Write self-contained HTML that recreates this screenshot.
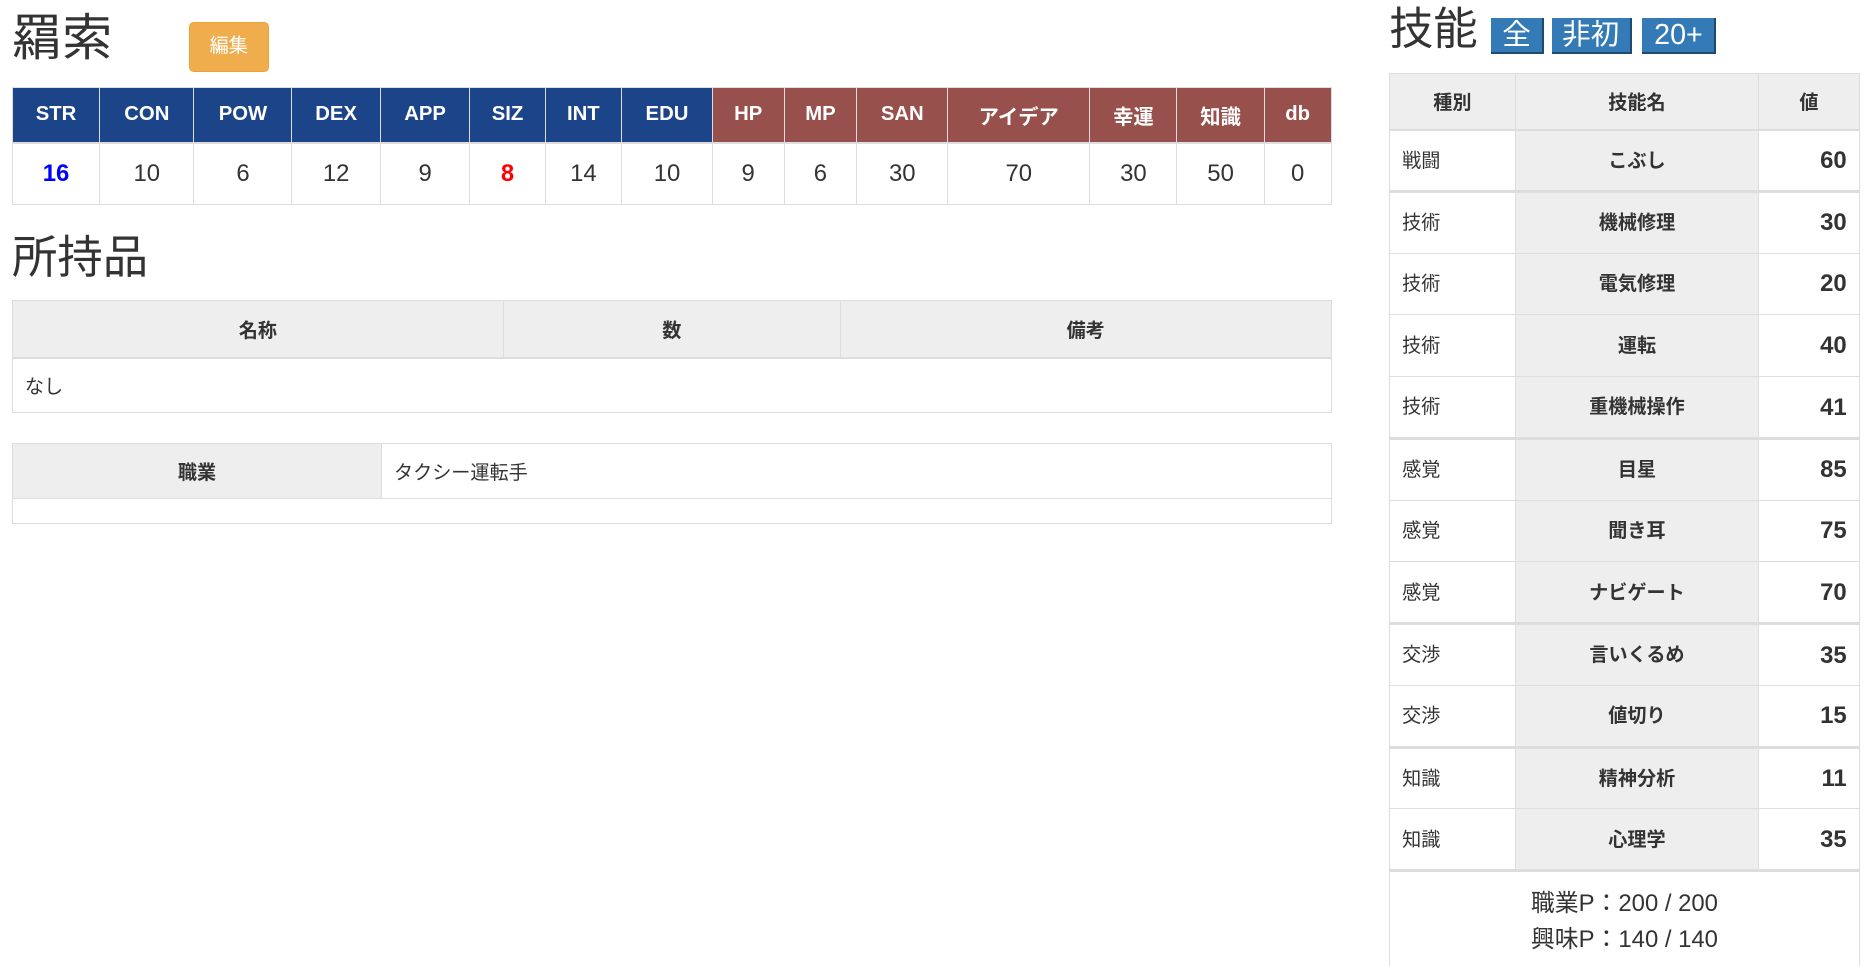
<!DOCTYPE html>
<html><head><meta charset="utf-8">
<style>
html,body{margin:0;padding:0;background:#fff;overflow:hidden}
body{width:1873px;height:966px}
#w{zoom:1.1945;position:relative;width:1568px;height:809px;font-family:"Liberation Sans","Noto Sans CJK JP",sans-serif;color:#333}
.a{position:absolute}
table{border-collapse:collapse;position:absolute;table-layout:fixed}
td,th{border:1px solid #ddd;padding:0;box-sizing:border-box}
h1,h2{margin:0;font-weight:normal;position:absolute;line-height:1}
#st th{background:#1c4489;color:#fff;font-size:17px;font-weight:bold;height:46px;border-color:#ddd;border-bottom:2px solid #ddd}
#st th.r{background:#97504b}
#st td{text-align:center;font-size:20px;height:52px}
.g th{background:#eee;font-size:16px;font-weight:bold;border-bottom:2px solid #ddd}
#sk td{height:51.7px;vertical-align:top}
#sk td.t{font-size:16px;padding:12px 0 0 10px}
#sk td.n{background:#eee;font-weight:bold;font-size:16px;text-align:center;padding-top:12px}
#sk td.v{font-weight:bold;font-size:20px;text-align:right;padding:14px 10px 0 0}
#sk tr.b td{border-top:3px solid #ddd}
.bt{position:absolute;top:15px;height:30px;background:#337ab7;color:#fff;font-size:24px;line-height:30px;text-align:center;box-sizing:border-box;border-right:2px solid #1e4a70;border-bottom:2px solid #1e4a70}
</style></head><body><div id="w">
<h1 style="left:10px;top:11px;font-size:42px">羂索</h1>
<div class="a" style="left:158px;top:18px;width:67px;height:42px;background:#f0ad4e;border:1px solid #eea236;box-sizing:border-box;border-radius:4px;color:#fff;font-size:16px;line-height:40px;text-align:center">編集</div>

<table id="st" style="left:10px;top:73px;width:1104px">
<colgroup><col style="width:73px"><col style="width:79px"><col style="width:82px"><col style="width:74px"><col style="width:75px"><col style="width:63px"><col style="width:64px"><col style="width:76px"><col style="width:60px"><col style="width:61px"><col style="width:76px"><col style="width:119px"><col style="width:73px"><col style="width:73px"><col style="width:56px"></colgroup>
<tr><th>STR</th><th>CON</th><th>POW</th><th>DEX</th><th>APP</th><th>SIZ</th><th>INT</th><th>EDU</th><th class="r">HP</th><th class="r">MP</th><th class="r">SAN</th><th class="r">アイデア</th><th class="r">幸運</th><th class="r">知識</th><th class="r">db</th></tr>
<tr><td style="color:#00f;font-weight:bold">16</td><td>10</td><td>6</td><td>12</td><td>9</td><td style="color:#f00;font-weight:bold">8</td><td>14</td><td>10</td><td>9</td><td>6</td><td>30</td><td>70</td><td>30</td><td>50</td><td>0</td></tr>
</table>

<h2 style="left:10px;top:197px;font-size:38px">所持品</h2>
<table class="g" style="left:10px;top:251px;width:1104px">
<colgroup><col style="width:411px"><col style="width:282px"><col style="width:411px"></colgroup>
<tr><th style="height:48px">名称</th><th>数</th><th>備考</th></tr>
<tr><td colspan="3" style="height:46px;font-size:16px;padding-left:10px">なし</td></tr>
</table>

<table class="g" style="left:10px;top:371px;width:1104px">
<colgroup><col style="width:309px"><col style="width:795px"></colgroup>
<tr><th style="height:46px;border-bottom:1px solid #ddd">職業</th><td style="font-size:16px;padding-left:10px">タクシー運転手</td></tr>
<tr><td colspan="2" style="height:21px"></td></tr>
</table>

<h1 style="left:1163px;top:7px;font-size:37px">技能</h1>
<div class="bt" style="left:1248px;width:45px">全</div>
<div class="bt" style="left:1299px;width:67px">非初</div>
<div class="bt" style="left:1375px;width:62px">20+</div>

<table id="sk" class="g" style="left:1163px;top:61px;width:393px">
<colgroup><col style="width:105px"><col style="width:204px"><col style="width:84px"></colgroup>
<tr><th style="height:47px">種別</th><th>技能名</th><th>値</th></tr>
<tr><td class="t">戦闘</td><td class="n">こぶし</td><td class="v">60</td></tr>
<tr class="b"><td class="t">技術</td><td class="n">機械修理</td><td class="v">30</td></tr>
<tr><td class="t">技術</td><td class="n">電気修理</td><td class="v">20</td></tr>
<tr><td class="t">技術</td><td class="n">運転</td><td class="v">40</td></tr>
<tr><td class="t">技術</td><td class="n">重機械操作</td><td class="v">41</td></tr>
<tr class="b"><td class="t">感覚</td><td class="n">目星</td><td class="v">85</td></tr>
<tr><td class="t">感覚</td><td class="n">聞き耳</td><td class="v">75</td></tr>
<tr><td class="t">感覚</td><td class="n">ナビゲート</td><td class="v">70</td></tr>
<tr class="b"><td class="t">交渉</td><td class="n">言いくるめ</td><td class="v">35</td></tr>
<tr><td class="t">交渉</td><td class="n">値切り</td><td class="v">15</td></tr>
<tr class="b"><td class="t">知識</td><td class="n">精神分析</td><td class="v">11</td></tr>
<tr><td class="t">知識</td><td class="n">心理学</td><td class="v">35</td></tr>
<tr class="b"><td colspan="3" style="height:90px;text-align:center;font-size:20px;line-height:30px;padding-top:12px;vertical-align:top">職業P：200 / 200<br>興味P：140 / 140</td></tr>
</table>
</div></body></html>
